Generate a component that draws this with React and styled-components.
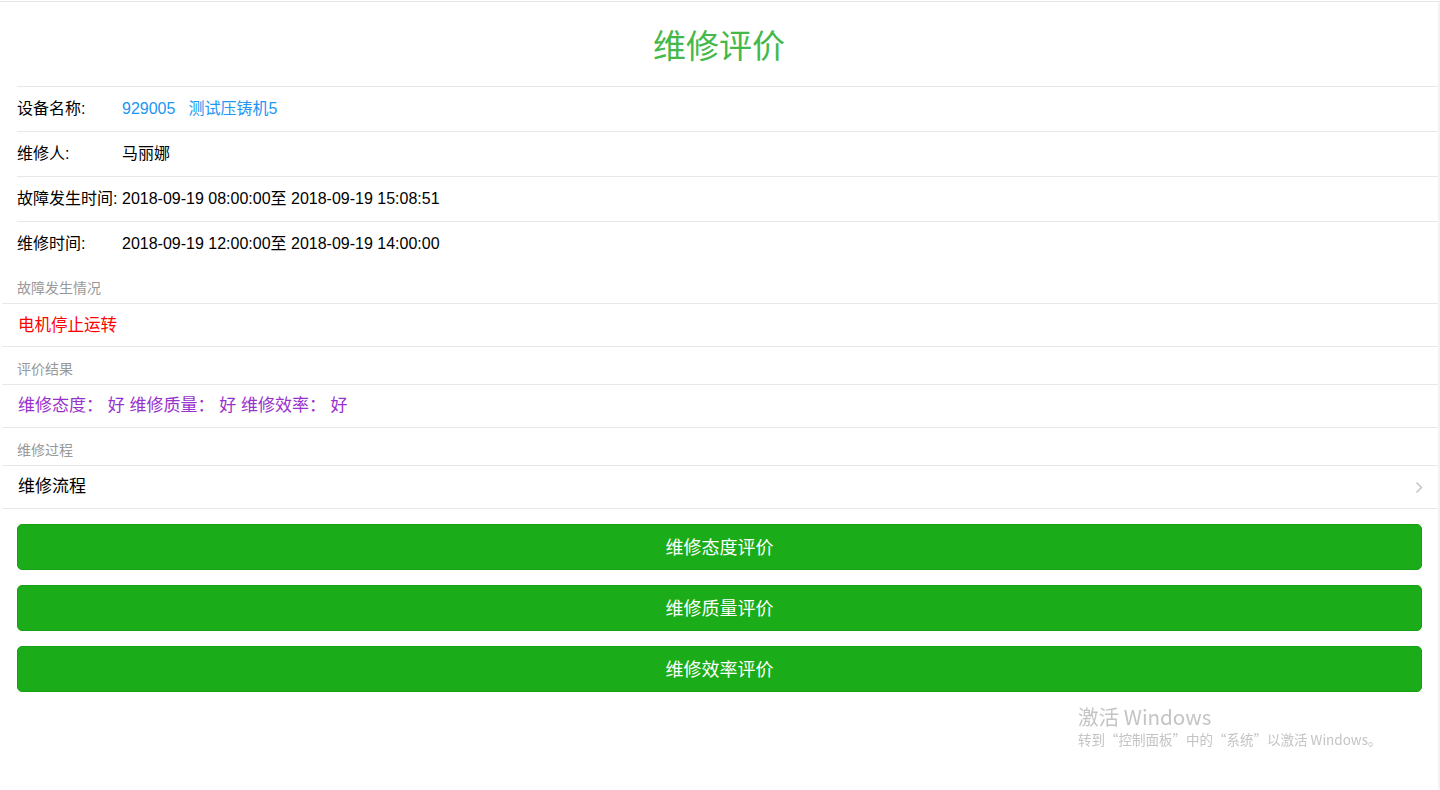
import React from "react";
import styled, { createGlobalStyle } from "styled-components";

const GlobalStyle = createGlobalStyle`
  html, body { margin: 0; padding: 0; background: #fff; }
  body {
    font-family: "Liberation Sans", "Noto Sans CJK SC", sans-serif;
    color: #000;
  }
`;

const Page = styled.div`
  margin-top: 1px;
  border-top: 1px solid #e5e5e5;
  border-right: 2px solid #f2f2f2;
  min-height: 788px;
  box-sizing: border-box;
`;

const Header = styled.h1`
  margin: 0;
  height: 84px;
  display: flex;
  align-items: center;
  justify-content: center;
  font-weight: normal;
  font-size: 33px;
  color: #45b84a;
`;

const InfoList = styled.div`
  margin-left: 17px;
`;

const InfoRow = styled.div`
  display: flex;
  align-items: center;
  height: 44px;
  border-top: 1px solid #e8e8e8;
  font-size: 16px;
  line-height: 20px;
`;

const Label = styled.span`
  width: 105px;
  flex-shrink: 0;
`;

const Value = styled.span`
  color: ${(p) => p.$color || "#000"};
`;

const Gap = styled.span`
  display: inline-block;
  width: 13px;
`;

const Group = styled.div`
  margin-left: 2px;
`;

const SectionTitle = styled.div`
  height: 37px;
  box-sizing: border-box;
  padding: 12px 0 5px 15px;
  font-size: 14px;
  line-height: 20px;
  color: #999;
`;

const Cell = styled.div`
  display: flex;
  align-items: center;
  justify-content: space-between;
  height: 42px;
  border-top: 1px solid #e8e8e8;
  border-bottom: 1px solid #e8e8e8;
  padding: 0 15px 0 16px;
  font-size: ${(p) => p.$size || "17px"};
  line-height: 22px;
  color: ${(p) => p.$color || "#000"};
`;

const Arrow = styled.svg`
  width: 8px;
  height: 13px;
`;

const ButtonArea = styled.div`
  display: flex;
  flex-direction: column;
  gap: 15px;
  padding: 15px 16px 0 17px;
`;

const Button = styled.button`
  height: 46px;
  padding: 0 0 3px;
  border: 1px solid #17a016;
  border-radius: 5px;
  background: #1aad19;
  color: #fff;
  font-family: "Liberation Sans", "Noto Sans CJK SC", sans-serif;
  font-size: 18px;
  cursor: pointer;
`;

const Watermark = styled.div`
  position: fixed;
  left: 1078px;
  top: 703px;
  color: #c4c4c4;
  font-family: "Noto Sans CJK SC", sans-serif;
  pointer-events: none;
`;

const WmTitle = styled.div`
  font-size: 20.6px;
  line-height: 26px;
`;

const WmSub = styled.div`
  font-size: 13.5px;
  line-height: 20px;
`;

export default function App() {
  return (
    <>
      <GlobalStyle />
      <Page>
        <Header>维修评价</Header>
        <InfoList>
          <InfoRow>
            <Label>设备名称:</Label>
            <Value $color="#2196f3">
              929005<Gap />测试压铸机5
            </Value>
          </InfoRow>
          <InfoRow>
            <Label>维修人:</Label>
            <Value>马丽娜</Value>
          </InfoRow>
          <InfoRow>
            <Label>故障发生时间:</Label>
            <Value>2018-09-19 08:00:00至 2018-09-19 15:08:51</Value>
          </InfoRow>
          <InfoRow>
            <Label>维修时间:</Label>
            <Value>2018-09-19 12:00:00至 2018-09-19 14:00:00</Value>
          </InfoRow>
        </InfoList>
        <Group>
          <SectionTitle>故障发生情况</SectionTitle>
          <Cell $color="#ff0000" $size="16.5px">电机停止运转</Cell>
        </Group>
        <Group>
          <SectionTitle>评价结果</SectionTitle>
          <Cell $color="#9932cc">维修态度： 好 维修质量： 好 维修效率： 好</Cell>
        </Group>
        <Group>
          <SectionTitle>维修过程</SectionTitle>
          <Cell>
            <span>维修流程</span>
            <Arrow viewBox="0 0 8 13">
              <polyline
                points="1.5,1.5 6.5,6.5 1.5,11.5"
                fill="none"
                stroke="#c7c7cc"
                strokeWidth="1.6"
              />
            </Arrow>
          </Cell>
        </Group>
        <ButtonArea>
          <Button>维修态度评价</Button>
          <Button>维修质量评价</Button>
          <Button>维修效率评价</Button>
        </ButtonArea>
      </Page>
      <Watermark>
        <WmTitle>激活 Windows</WmTitle>
        <WmSub>转到“控制面板”中的“系统”以激活 Windows。</WmSub>
      </Watermark>
    </>
  );
}
